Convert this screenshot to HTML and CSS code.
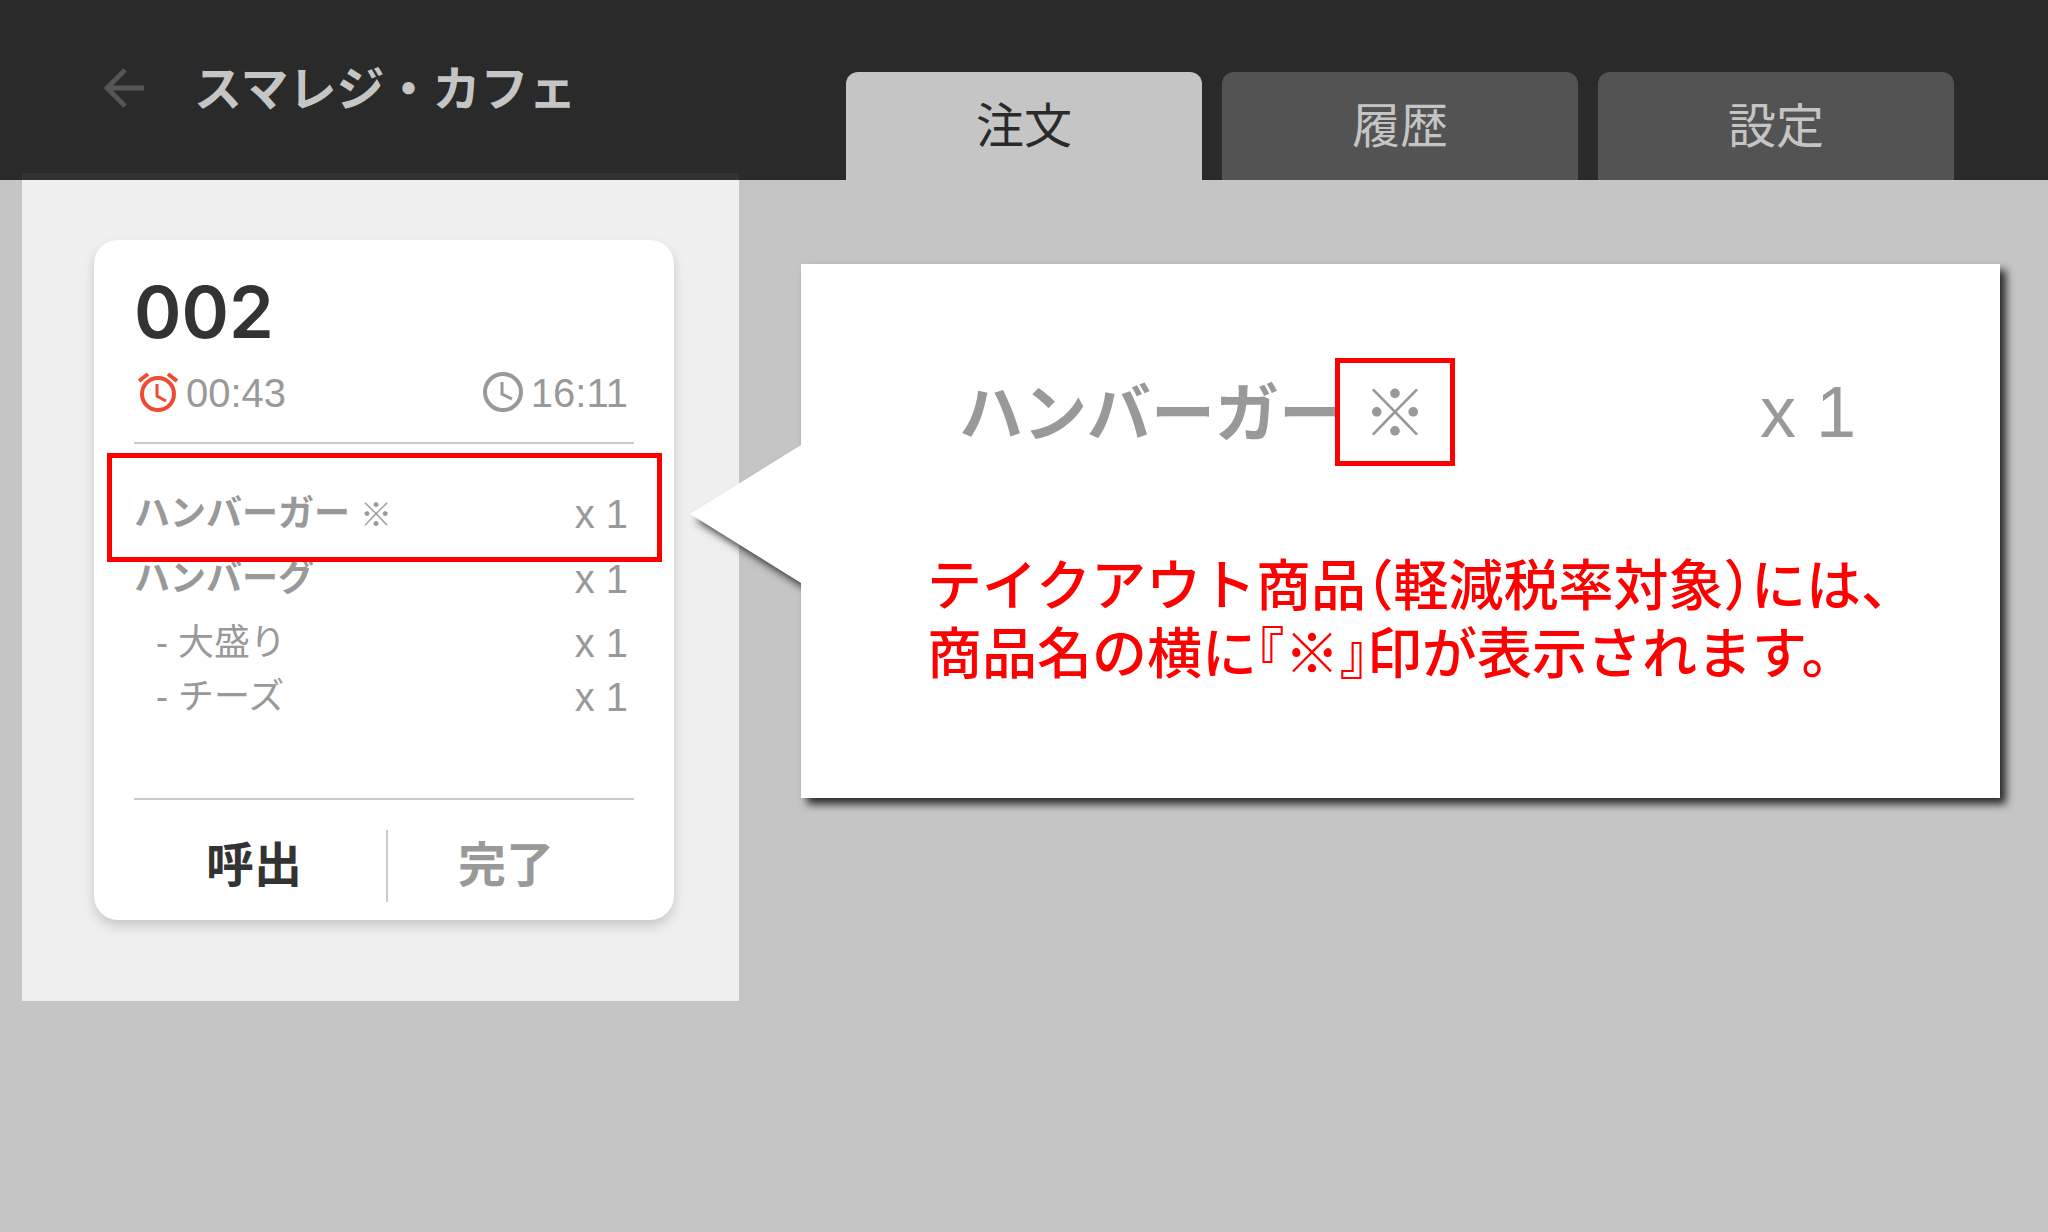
FILE: index.html
```html
<!DOCTYPE html>
<html lang="ja">
<head>
<meta charset="utf-8">
<meta name="viewport" content="width=device-width, initial-scale=1">
<title>スマレジ・カフェ</title>
<link rel="stylesheet" href="styles.css">
</head>
<body>
<header class="topbar">
  <button class="back" type="button" aria-label="戻る">
    <svg viewBox="0 0 40 40" width="40" height="40" aria-hidden="true"><path d="M40 20H3M21 2L3 20l18 18"/></svg>
  </button>
  <h1 class="shop">スマレジ・カフェ</h1>
  <nav class="tabs">
    <a class="tab tab-active" href="#orders">注文</a>
    <a class="tab" href="#history">履歴</a>
    <a class="tab" href="#settings">設定</a>
  </nav>
</header>
<main class="board">
  <section class="lane">
    <article class="ticket">
      <h2 class="number">002</h2>
      <div class="times">
        <span class="time">
          <svg class="alarm" viewBox="0 0 40 40" width="40" height="40" aria-hidden="true"><circle cx="20" cy="22" r="16"/><path d="M1 9l9-7M39 9l-9-7"/><path class="hands" d="M19 12v12l9 5"/></svg>
          <span class="clock-text">00:43</span>
        </span>
        <span class="time">
          <svg class="clock" viewBox="0 0 40 40" width="40" height="40" aria-hidden="true"><circle cx="20" cy="20" r="18"/><path class="hands" d="M19 10v12l10 5"/></svg>
          <span class="clock-text">16:11</span>
        </span>
      </div>
      <ul class="items">
        <li class="item item-marked"><span class="name">ハンバーガー <span class="mark">※</span></span><span>x 1</span></li>
        <li class="item"><span class="name">ハンバーグ</span><span>x 1</span></li>
      </ul>
      <ul class="options">
        <li class="option"><span>- 大盛り</span><span>x 1</span></li>
        <li class="option"><span>- チーズ</span><span>x 1</span></li>
      </ul>
      <div class="actions">
        <button class="action" type="button">呼出</button>
        <button class="action action-done" type="button">完了</button>
      </div>
    </article>
  </section>
  <aside class="callout">
    <div class="sample">
      <span class="sample-name">ハンバーガー</span>
      <span class="sample-mark">※</span>
      <span class="sample-count">x 1</span>
    </div>
    <p class="note">テイクアウト商品（軽減税率対象）には、<br>商品名の横に『※』印が表示されます。</p>
  </aside>
</main>
</body>
</html>
```
FILE: styles.css
```css
* {
  box-sizing: border-box;
}

body {
  margin: 0;
  min-height: 100vh;
  background: #c5c5c5;
  color: #999;
  font-family: "Liberation Sans", "Noto Sans CJK JP", sans-serif;
}

h1,
h2,
p,
ul {
  margin: 0;
  padding: 0;
  list-style: none;
}

button {
  padding: 0;
  border: 0;
  background: none;
  font: inherit;
  color: inherit;
}

svg {
  display: block;
  flex: none;
  fill: none;
  stroke: currentColor;
}

/* Top bar */
.topbar {
  display: flex;
  height: 180px;
  padding: 0 94px 0 104px;
  background: #2a2a2a;
  color: #c5c5c5;
}

.back {
  height: 40px;
  margin: 68px 50px 0 0;
  color: #555;
  stroke-width: 5;
}

.shop {
  padding-top: 54px;
  font-size: 48px;
  line-height: 72px;
  white-space: nowrap;
}

.tabs {
  display: flex;
  flex: 1;
  justify-content: flex-end;
  gap: 20px;
  padding-top: 72px;
}

.tab {
  flex: 0 1 356px;
  padding-top: 4px;
  border-radius: 12px 12px 0 0;
  background: #535353;
  color: #c5c5c5;
  font-size: 48px;
  line-height: 102px;
  text-align: center;
  text-decoration: none;
}

.tab-active {
  background: #c5c5c5;
  color: #2a2a2a;
}

/* Order lane */
.board {
  display: flex;
  align-items: flex-start;
  padding: 0 48px 0 22px;
}

.lane {
  position: relative;
  flex: 0 0 717px;
  padding: 60px 65px 81px 72px;
  background: #efefef;
}

.lane::before {
  content: "";
  position: absolute;
  inset: -7px 0 100% 0;
  background: #333;
}

.ticket {
  padding: 32px 40px 18px;
  border-radius: 24px;
  background: #fff;
  box-shadow: 0 6px 12px rgba(0, 0, 0, 0.16);
}

.number {
  color: #333;
  font-family: Inter, sans-serif;
  font-size: 72px;
  font-weight: 600;
  line-height: 80px;
}

.times {
  display: flex;
  justify-content: space-between;
  padding: 20px 6px 30px 4px;
  border-bottom: 2px solid #ccc;
  font-size: 40px;
  line-height: 40px;
}

.time {
  display: flex;
  gap: 8px;
}

.clock-text {
  padding-top: 2px;
  line-height: 38px;
}

.alarm {
  color: #f04a32;
  stroke-width: 4;
}

.clock {
  stroke-width: 4;
}

.hands {
  stroke-width: 3;
}

.items {
  padding-top: 38px;
}

.item,
.option {
  display: flex;
  justify-content: space-between;
  padding-right: 6px;
  font-size: 40px;
  line-height: 64px;
}

.name {
  font-size: 36px;
  font-weight: 700;
}

.mark {
  font-size: 32px;
  font-weight: 400;
}

.item-marked {
  position: relative;
}

.item-marked::after {
  content: "";
  position: absolute;
  inset: -29px -28px -15px -27px;
  border: 5px solid #f00;
}

.options {
  padding: 5px 0 74px;
  border-bottom: 2px solid #ccc;
}

.option {
  padding-left: 22px;
  line-height: 54px;
}

.option span:first-child {
  font-size: 36px;
}

.actions {
  display: grid;
  grid-template-columns: 10fr 9fr;
  margin: 30px 10px 0 -12px;
}

.action {
  color: #333;
  font-size: 48px;
  font-weight: 700;
  line-height: 72px;
}

.action-done {
  border-left: 2px solid #ccc;
  color: #999;
}

/* Callout */
.callout {
  position: relative;
  flex: 1;
  min-width: 0;
  margin: 84px 0 0 62px;
  padding: 94px 100px 110px 126px;
  background: #fff;
  filter: drop-shadow(6px 6px 4px rgba(0, 0, 0, 0.8));
}

.callout::before {
  content: "";
  position: absolute;
  top: 181px;
  right: 100%;
  width: 111px;
  height: 138px;
  background: #fff;
  clip-path: polygon(0 50%, 100% 0, 100% 100%);
}

.sample {
  display: flex;
  align-items: center;
  padding: 0 44px 0 32px;
  font-size: 64px;
  line-height: 98px;
}

.sample-name {
  padding-top: 4px;
  font-weight: 700;
}

.sample-mark {
  margin-left: -8px;
  padding: 4px 23px 0;
  border: 5px solid #f00;
  line-height: 94px;
}

.sample-count {
  margin-left: auto;
  font-size: 72px;
}

.note {
  margin-top: 86px;
  color: #f00;
  font-size: 55px;
  font-weight: 500;
  font-feature-settings: "halt";
  line-height: 68px;
  white-space: nowrap;
}
```
